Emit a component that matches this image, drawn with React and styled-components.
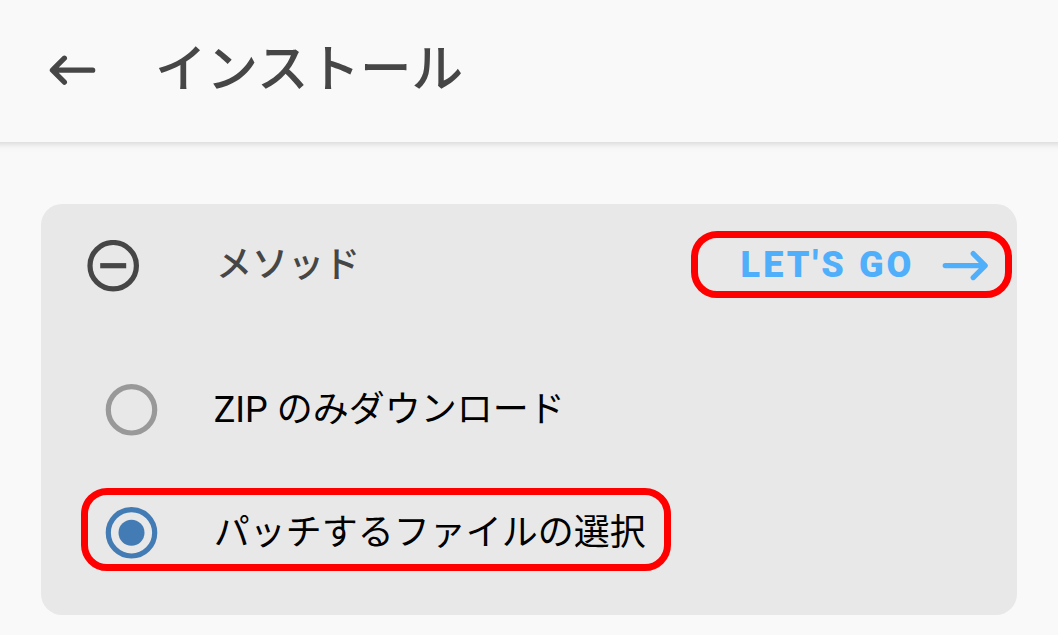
import React, { useState } from 'react'
import styled, { createGlobalStyle } from 'styled-components'

//#region styles
const GlobalStyle = createGlobalStyle`
  * {
    box-sizing: border-box;
  }

  body {
    margin: 0;
    background: #f9f9f9;
    font-family: Roboto, 'Noto Sans CJK JP', sans-serif;
  }
`

const Screen = styled.div`
  height: 635px;
  overflow: hidden;
  background: #f9f9f9;
`

const Toolbar = styled.header`
  display: flex;
  align-items: center;
  height: 142px;
  padding: 0 0 2px 49px;
  background: #f9f9f9;
  box-shadow: 0 -6px 5px 8px rgba(0, 0, 0, 0.08), 0 -4px 8px 8px rgba(0, 0, 0, 0.05);
`

const IconButton = styled.button`
  display: flex;
  padding: 0;
  border: 0;
  background: none;
  color: #464646;
`

const Title = styled.h1`
  margin: 0 0 0 58px;
  color: #464646;
  font-size: 51.5px;
  font-weight: 500;
  line-height: 60px;
`

const Card = styled.section`
  width: 976px;
  height: 411px;
  margin: 62px 0 0 41px;
  border-radius: 21px;
  background: #e8e8e8;
`

const CardHeader = styled.div`
  position: relative;
  display: flex;
  align-items: center;
  height: 123px;
  padding-left: 46px;
`

const CardTitle = styled.h2`
  flex: 1;
  margin: 0 0 1px 77px;
  color: #464646;
  font-size: 36px;
  font-weight: 500;
  line-height: 48px;
`

const GoButton = styled.button`
  display: flex;
  align-items: center;
  gap: 26.5px;
  margin: 0 28px 1px 0;
  padding: 0;
  border: 0;
  background: none;
  color: #50affa;
  font-family: inherit;
  font-size: 36px;
  font-weight: 900;
  letter-spacing: 3.1px;
  line-height: 48px;
`

const Options = styled.div`
  padding-top: 21px;
`

const Option = styled.label`
  position: relative;
  display: flex;
  align-items: center;
  height: 123px;
  padding-left: 64px;
  color: #000;
  font-size: 36px;
  line-height: 48px;
`

const OptionLabel = styled.span`
  margin-left: 55.7px;
  white-space: nowrap;
`

const RadioIcon = styled.svg`
  flex: none;
  color: ${(p) => (p.$checked ? '#437cb4' : '#999')};
`

const HiddenInput = styled.input`
  position: absolute;
  opacity: 0;
`

// red marker laid over the part to press
const Highlight = styled.span`
  position: absolute;
  top: ${(p) => p.$top}px;
  left: ${(p) => p.$left}px;
  width: ${(p) => p.$width}px;
  height: ${(p) => p.$height}px;
  border: 7px solid #f00;
  border-radius: 26px;
  pointer-events: none;
`
//#endregion

const options = [
  { id: 'zip', label: 'ZIP のみダウンロード' },
  { id: 'patch', label: 'パッチするファイルの選択', marked: true },
]

function BackIcon() {
  return (
    <svg width="48" height="32" viewBox="0 0 48 32" fill="none" stroke="currentColor" strokeWidth="5.2" strokeLinecap="round" strokeLinejoin="round">
      <path d="M15.4 4.2l-12 12 12 12M4.5 16.2h39.2" />
      <path d="M3.2 16.2 8 12.2v8z" fill="currentColor" stroke="none" />
    </svg>
  )
}

function ForwardIcon() {
  return (
    <svg width="48" height="32" viewBox="0 0 48 32" fill="none" stroke="currentColor" strokeWidth="5.2" strokeLinecap="round" strokeLinejoin="round">
      <path d="M32.2 4.6l12 12-12 12M43.5 16.6H4.2" />
      <path d="M44.4 16.6 39.6 12.6v8z" fill="currentColor" stroke="none" />
    </svg>
  )
}

function MinusCircleIcon() {
  return (
    <svg width="52" height="52" viewBox="0 0 52 52" fill="none" stroke="#464646" strokeWidth="5.2">
      <circle cx="26.2" cy="25.7" r="23.2" />
      <path d="M13.2 25.7h26" />
    </svg>
  )
}

function Radio({ checked }) {
  return (
    <RadioIcon $checked={checked} width="53" height="52" viewBox="0 0 53 52">
      <circle cx="26.5" cy="25.8" r="23.2" fill="none" stroke="currentColor" strokeWidth="5.2" />
      {checked && <circle cx="26.5" cy="25.8" r="13" fill="currentColor" />}
    </RadioIcon>
  )
}

function App() {
  const [method, setMethod] = useState('patch')

  return (
    <Screen>
      <GlobalStyle />
      <Toolbar>
        <IconButton aria-label="戻る">
          <BackIcon />
        </IconButton>
        <Title>インストール</Title>
      </Toolbar>
      <Card>
        <CardHeader>
          <MinusCircleIcon />
          <CardTitle>メソッド</CardTitle>
          <GoButton>
            LET'S GO
            <ForwardIcon />
          </GoButton>
          <Highlight $top={27} $left={650} $width={321} $height={67} />
        </CardHeader>
        <Options>
          {options.map((option) => (
            <Option key={option.id}>
              <HiddenInput
                type="radio"
                name="method"
                checked={method === option.id}
                onChange={() => setMethod(option.id)}
              />
              <Radio checked={method === option.id} />
              <OptionLabel>{option.label}</OptionLabel>
              {option.marked && <Highlight $top={17} $left={40} $width={590} $height={83} />}
            </Option>
          ))}
        </Options>
      </Card>
    </Screen>
  )
}

export default App
